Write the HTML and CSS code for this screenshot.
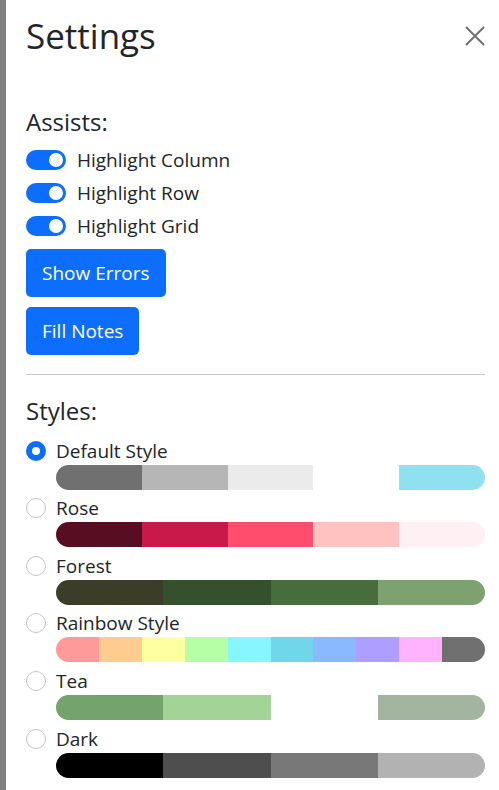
FILE: index.html
```html
<!DOCTYPE html>
<html>
<head>
<meta charset="utf-8">
<link rel="stylesheet" href="styles.css">
</head>
<body>
<div class="edge"></div>
<div class="panel">
  <div class="header">
    <h1 class="title">Settings</h1>
    <button class="close" aria-label="Close">
      <svg width="20" height="20" viewBox="0 0 20 20"><path d="M1 1L19 19M19 1L1 19" stroke="#707070" stroke-width="2" fill="none"/></svg>
    </button>
  </div>

  <h2 class="section assists">Assists:</h2>
  <div class="switches">
    <label class="switch-row"><span class="switch"><span class="knob"></span></span>Highlight Column</label>
    <label class="switch-row"><span class="switch"><span class="knob"></span></span>Highlight Row</label>
    <label class="switch-row"><span class="switch"><span class="knob"></span></span>Highlight Grid</label>
  </div>
  <div class="buttons">
    <button class="btn">Show Errors</button>
    <button class="btn">Fill Notes</button>
  </div>

  <hr class="divider">

  <h2 class="section styles-title">Styles:</h2>
  <div class="styles">
    <div class="style">
      <div class="style-label"><span class="radio checked"></span>Default Style</div>
      <div class="palette">
        <span style="background:#707070"></span><span style="background:#b6b6b6"></span><span style="background:#ebebeb"></span><span style="background:#ffffff"></span><span style="background:#90e0ef"></span>
      </div>
    </div>
    <div class="style">
      <div class="style-label"><span class="radio"></span>Rose</div>
      <div class="palette">
        <span style="background:#590d22"></span><span style="background:#c9184a"></span><span style="background:#ff4d6d"></span><span style="background:#ffc2c0"></span><span style="background:#fff0f3"></span>
      </div>
    </div>
    <div class="style">
      <div class="style-label"><span class="radio"></span>Forest</div>
      <div class="palette">
        <span style="background:#3b3d29"></span><span style="background:#34502d"></span><span style="background:#466d3b"></span><span style="background:#7ea26f"></span>
      </div>
    </div>
    <div class="style">
      <div class="style-label"><span class="radio"></span>Rainbow Style</div>
      <div class="palette">
        <span style="background:#ff9a9a"></span><span style="background:#ffcc8f"></span><span style="background:#fdffa0"></span><span style="background:#b7ffa6"></span><span style="background:#88f6ff"></span><span style="background:#70d6e9"></span><span style="background:#8ab9ff"></span><span style="background:#ae9eff"></span><span style="background:#ffb3ff"></span><span style="background:#707070"></span>
      </div>
    </div>
    <div class="style">
      <div class="style-label"><span class="radio"></span>Tea</div>
      <div class="palette">
        <span style="background:#74a46c"></span><span style="background:#a1d496"></span><span style="background:#ffffff"></span><span style="background:#a3b59f"></span>
      </div>
    </div>
    <div class="style">
      <div class="style-label"><span class="radio"></span>Dark</div>
      <div class="palette">
        <span style="background:#000000"></span><span style="background:#4e4e4e"></span><span style="background:#787878"></span><span style="background:#b2b2b2"></span>
      </div>
    </div>
  </div>
</div>
</body>
</html>
```

FILE: styles.css
```css
* { box-sizing: border-box; }
html, body { margin: 0; padding: 0; }
body {
  display: flex;
  min-height: 790px;
  background: #fff;
  font-family: "Open Sans", "Noto Sans", sans-serif;
  color: #212529;
  font-size: 19px;
  overflow: hidden;
}
.edge { width: 6px; background: #808080; flex: none; }
.panel { flex: 1; padding: 0 14px 0 20px; }
.header {
  display: flex;
  justify-content: space-between;
  align-items: center;
  height: 72px;
}
.title {
  margin: 0;
  font-size: 35px;
  font-weight: 500;
  line-height: 1.2;
}
.close {
  border: 0;
  background: none;
  padding: 0;
  width: 20px;
  height: 20px;
  display: flex;
}
.section {
  font-size: 24px;
  font-weight: 500;
  line-height: 1.2;
}
.assists { margin: 36px 0 9px; }
.styles-title { margin: 22px 0 11px; }
.switches { display: flex; flex-direction: column; gap: 5px; }
.switch-row {
  display: flex;
  align-items: center;
  gap: 11px;
  height: 28px;
  line-height: 1.5;
}
.switch {
  width: 40px;
  height: 20px;
  border-radius: 10px;
  background: #0d6efd;
  display: flex;
  align-items: center;
  justify-content: flex-end;
  padding-right: 3px;
}
.knob { width: 14px; height: 14px; border-radius: 50%; background: #fff; }
.buttons {
  display: flex;
  flex-direction: column;
  align-items: flex-start;
  gap: 10px;
  margin-top: 9px;
}
.btn {
  font-family: inherit;
  font-size: 19px;
  color: #fff;
  background: #0d6efd;
  border: 0;
  border-radius: 5px;
  height: 48px;
  padding: 0 16px;
  line-height: 1.5;
}
.divider {
  border: 0;
  border-top: 1px solid #c8c8c8;
  margin: 19px 0 0;
}
.styles { display: flex; flex-direction: column; gap: 4.6px; }
.style-label {
  display: flex;
  align-items: center;
  gap: 10px;
  height: 28px;
}
.radio {
  width: 20px;
  height: 20px;
  border-radius: 50%;
  border: 1px solid #c4c4c4;
  flex: none;
}
.radio.checked {
  border: 6px solid #0d6efd;
  background: #fff;
}
.palette {
  display: flex;
  height: 25px;
  margin-left: 30px;
  border-radius: 13px;
  overflow: hidden;
}
.palette span { flex: 1; }
```
